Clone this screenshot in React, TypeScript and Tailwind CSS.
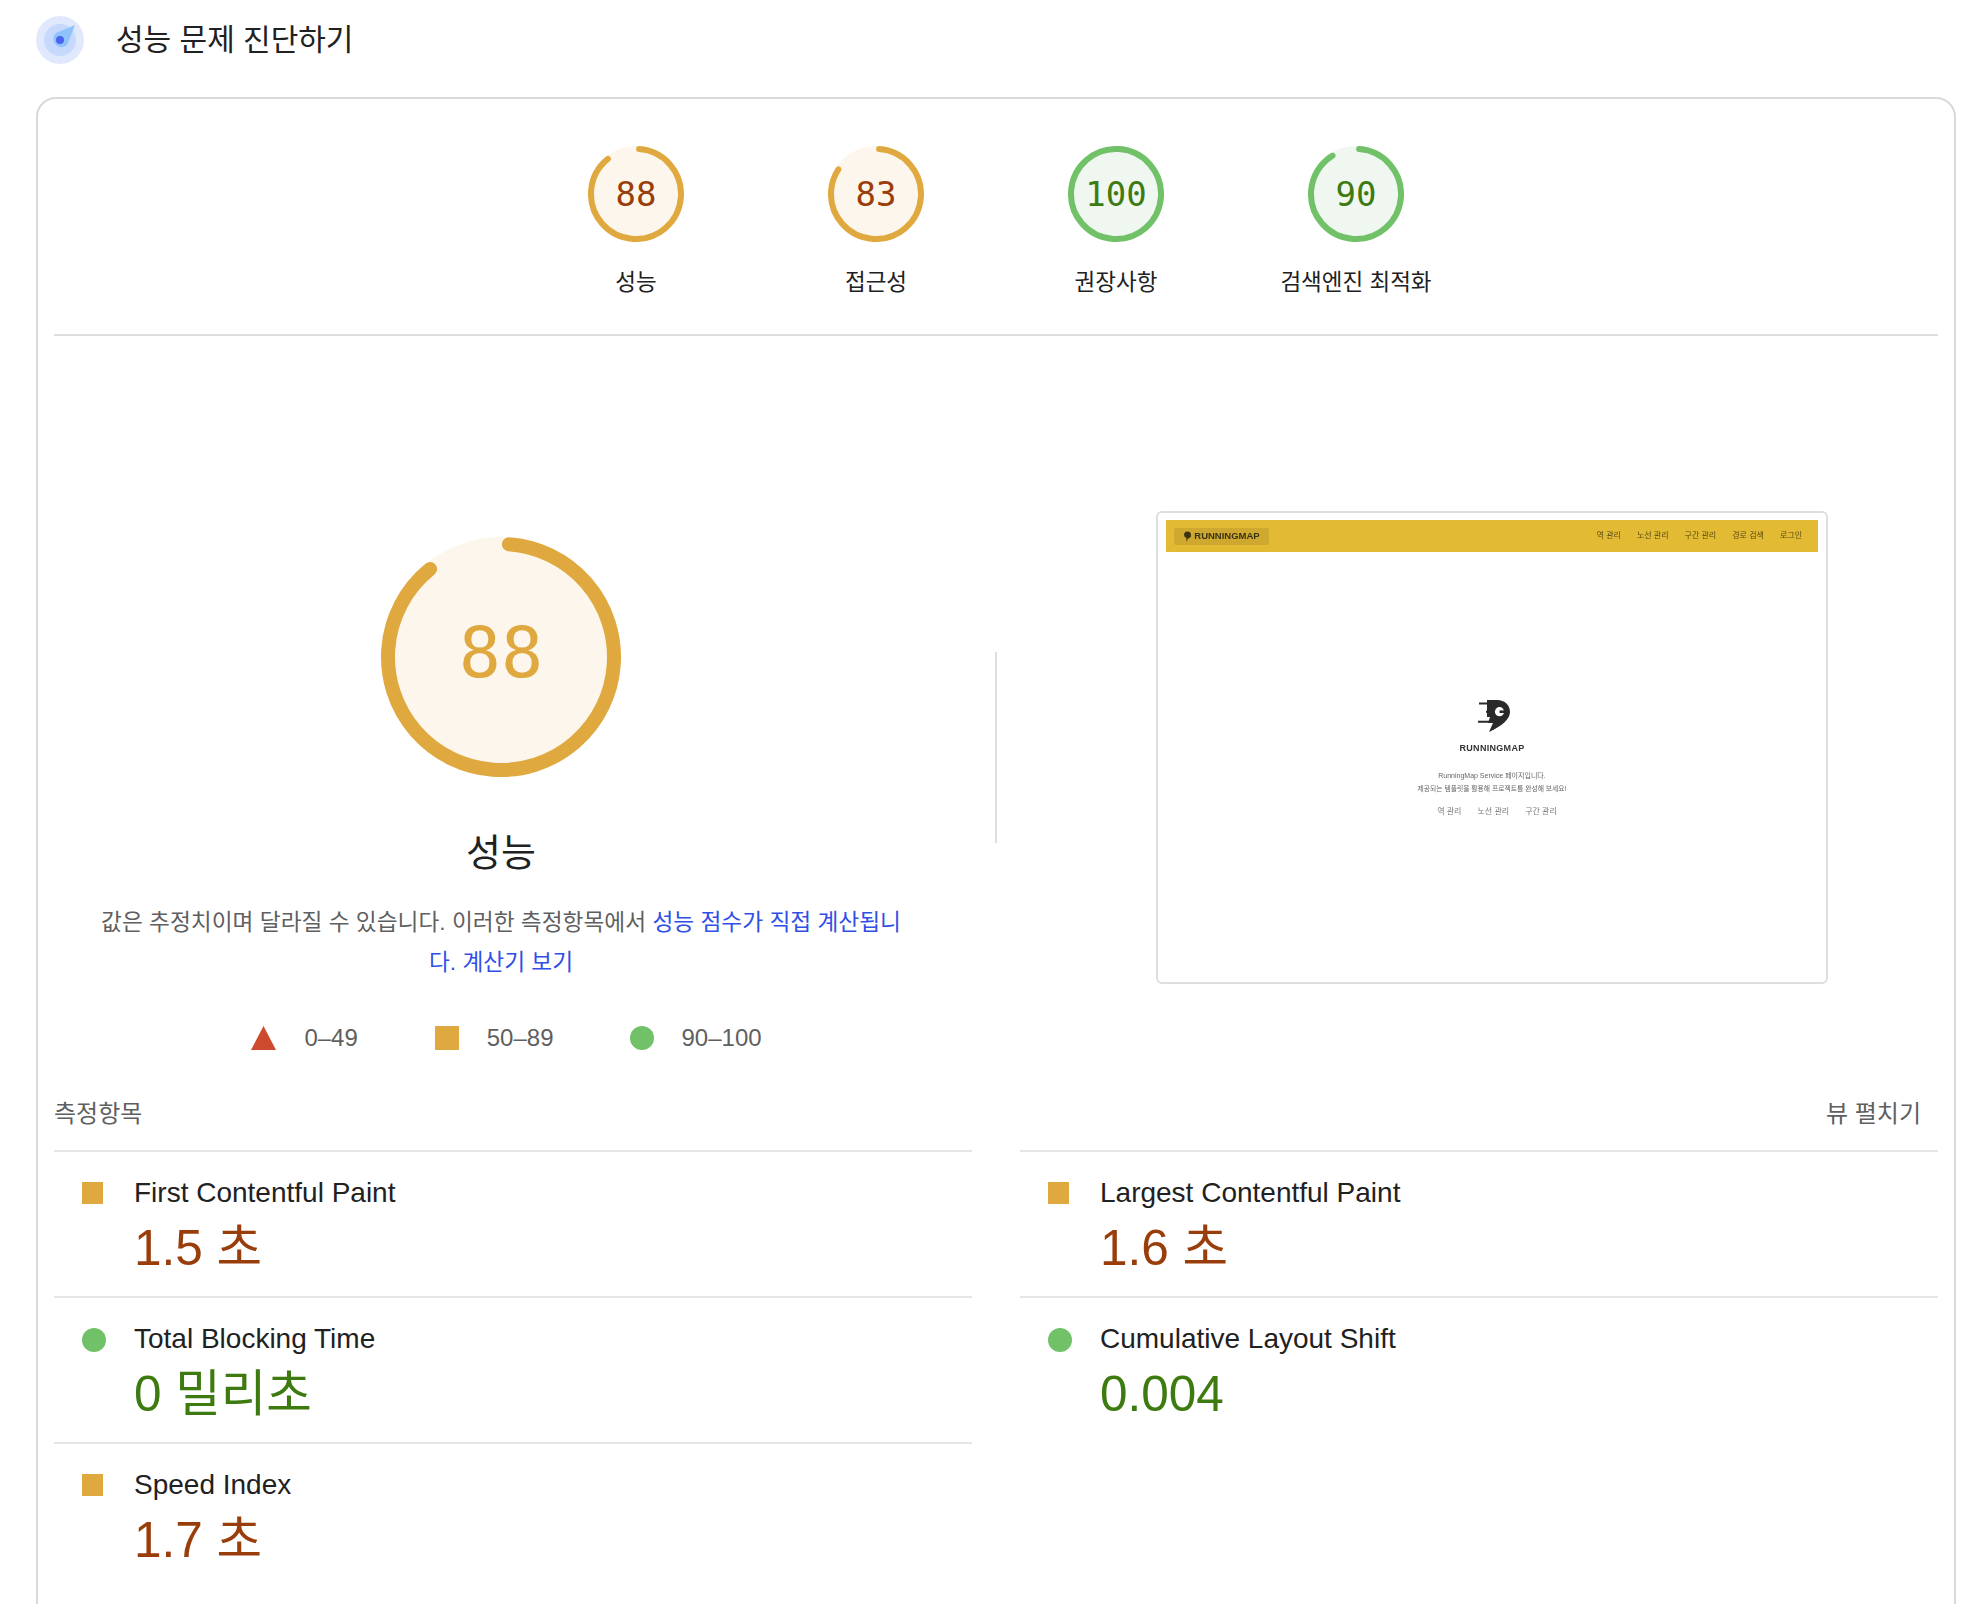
const sans = "font-['Liberation_Sans','Noto_Sans_CJK_KR',sans-serif]";

type Tone = "orange" | "green";

const tones = {
  orange: { ring: "#e0a93f", fill: "#fdf6ec", text: "#993d0a" },
  green: { ring: "#70c168", fill: "#f0f7f0", text: "#3d7a10" },
};

function Ring({ score, tone, size, stroke }: { score: number; tone: Tone; size: number; stroke: number }) {
  const c = tones[tone];
  const r = (size - stroke) / 2;
  const len = 2 * Math.PI * r;
  return (
    <svg width={size} height={size} viewBox={`0 0 ${size} ${size}`} className="block">
      <circle cx={size / 2} cy={size / 2} r={size / 2} fill={c.fill} />
      <circle
        cx={size / 2}
        cy={size / 2}
        r={r}
        fill="none"
        stroke={c.ring}
        strokeWidth={stroke}
        strokeLinecap="round"
        strokeDasharray={score === 100 ? `${len} 0` : `${(len * score) / 100} ${len}`}
        transform={`rotate(-86 ${size / 2} ${size / 2})`}
      />
    </svg>
  );
}

function Gauge({ score, label, tone }: { score: number; label: string; tone: Tone }) {
  return (
    <div className="flex w-[240px] flex-col items-center">
      <div className="relative">
        <Ring score={score} tone={tone} size={96} stroke={6} />
        <div
          className="absolute inset-0 flex items-center justify-center font-['DejaVu_Sans_Mono',monospace] text-[34px]"
          style={{ color: tones[tone].text }}
        >
          {score}
        </div>
      </div>
      <div className="mt-[25px] whitespace-nowrap text-[22.5px] leading-[32px] text-[#212121]">{label}</div>
    </div>
  );
}

function Metric({ name, value, shape, tone }: { name: string; value: string; shape: "square" | "circle"; tone: Tone }) {
  return (
    <div className="h-[146px] border-t-2 border-[#e6e6e6]">
      <div className="flex pt-[23px]">
        <div className="ml-[28px] w-[52px] pt-[7px]">
          {shape === "square" ? (
            <div className="h-[22px] w-[21px] bg-[#e0a93f]" />
          ) : (
            <div className="h-[24px] w-[24px] rounded-full bg-[#70c168]" />
          )}
        </div>
        <div>
          <div className="text-[28px] leading-[36px] text-[#212121]">{name}</div>
          <div className="mt-[9px] text-[49.5px] leading-[56px]" style={{ color: tones[tone].text }}>
            {value}
          </div>
        </div>
      </div>
    </div>
  );
}

function PageShot() {
  return (
    <div className="h-[473px] w-[672px] rounded-[6px] border-2 border-[#dedede] bg-white px-[8px] pt-[7px]">
      <div className="flex h-[32px] items-center justify-between bg-[#e2ba33] pl-[8px] pr-[16px] blur-[0.6px]">
        <div className="flex h-[17px] w-[95px] items-center justify-center gap-[2px] rounded-[2px] bg-[#cfa92f] text-[9.5px] font-bold text-[#3a3212]">
          <svg width="9" height="11" viewBox="0 0 9 11">
            <path d="M1 4a3.5 3.5 0 1 1 4 3.5L3.5 11V7A3.5 3.5 0 0 1 1 4z" fill="#3a3212" />
          </svg>
          RUNNINGMAP
        </div>
        <div className="flex gap-[16px] text-[8px] text-[#5a4c14]">
          <span>역 관리</span>
          <span>노선 관리</span>
          <span>구간 관리</span>
          <span>경로 검색</span>
          <span>로그인</span>
        </div>
      </div>
      <div className="flex flex-col items-center pt-[147px] blur-[0.6px]">
        <svg width="40" height="38" viewBox="0 0 40 38">
          <path d="M15 1h10c8 0 13 5 13 12 0 7-8 14-21 20l4-9h-5l2-6h-3z" fill="#2a2a2a" />
          <path d="M7 4.5h12M14 12.7h5M6 22.7h14" stroke="#2a2a2a" strokeWidth="2" />
          <circle cx="27.5" cy="12.7" r="4.6" fill="#fff" />
          <path d="M27.5 11.4h6v2.6h-6z" fill="#2a2a2a" />
        </svg>
        <div className="mt-[5px] text-[9px] font-bold leading-[12px] tracking-[0.3px] text-[#333]">RUNNINGMAP</div>
        <div className="mt-[15px] text-[7px] leading-[13px] text-[#666]">RunningMap Service 페이지입니다.</div>
        <div className="text-[6.8px] leading-[13px] text-[#666]">제공되는 템플릿을 활용해 프로젝트를 완성해 보세요!</div>
        <div className="ml-[10px] mt-[11px] flex gap-[16px] text-[8px] text-[#777]">
          <span>역 관리</span>
          <span>노선 관리</span>
          <span>구간 관리</span>
        </div>
      </div>
    </div>
  );
}

export default function App() {
  return (
    <div className={`h-[1604px] w-[1986px] overflow-hidden bg-white ${sans}`}>
      {/* Header */}
      <div className="flex h-[97px] items-start pl-[36px] pt-[16px]">
        <svg width="48" height="48" viewBox="0 0 48 48">
          <circle cx="24" cy="24" r="24" fill="#e0e9fc" />
          <circle cx="24" cy="24" r="16" fill="#c6d8fb" />
          <path d="M39 9L31 29a8 8 0 1 1-11-12z" fill="#8fc2fb" />
          <circle cx="24" cy="24" r="4" fill="#4c63f0" />
        </svg>
        <div className="ml-[32px] text-[30px] leading-[48px] text-[#212121]">성능 문제 진단하기</div>
      </div>

      {/* Report card */}
      <div className="ml-[36px] h-[1600px] w-[1920px] rounded-t-[20px] border-2 border-[#d9d9de] px-[16px]">
        <div className="flex h-[237px] justify-center border-b-2 border-[#dedede] pt-[47px]">
          <Gauge score={88} label="성능" tone="orange" />
          <Gauge score={83} label="접근성" tone="orange" />
          <Gauge score={100} label="권장사항" tone="green" />
          <Gauge score={90} label="검색엔진 최적화" tone="green" />
        </div>

        <div className="flex">
          <div className="flex w-[894px] flex-col items-center pt-[201px]">
            <div className="relative">
              <Ring score={88} tone="orange" size={240} stroke={14} />
              <div className="absolute inset-0 flex items-center justify-center pb-[8px] font-['DejaVu_Sans_Mono',monospace] text-[70px] font-light text-[#e0a93f]">
                88
              </div>
            </div>
            <div className="mt-[51px] text-[38px] leading-[50px] text-[#212121]">성능</div>
            <div className="mt-[24px] w-[812px] text-center text-[22.7px] leading-[40px] text-[#5f5f5f]">
              값은 추정치이며 달라질 수 있습니다. 이러한 측정항목에서{" "}
              <span className="text-[#2f4fe6]">성능 점수가 직접 계산됩니다.</span>{" "}
              <span className="text-[#2f4fe6]">계산기 보기</span>
            </div>
            <div className="ml-[11px] mt-[42px] flex items-center text-[24px] leading-[28px] text-[#5f5f5f]">
              <svg width="25" height="24" viewBox="0 0 25 24">
                <path d="M12.5 0L25 24H0z" fill="#cc4b2e" />
              </svg>
              <span className="ml-[28px]">0–49</span>
              <div className="ml-[77px] h-[24px] w-[24px] bg-[#e0a93f]" />
              <span className="ml-[28px]">50–89</span>
              <div className="ml-[76px] h-[24px] w-[24px] rounded-full bg-[#70c168]" />
              <span className="ml-[28px]">90–100</span>
            </div>
          </div>
          <div className="ml-[47px] mt-[316px] h-[191px] w-[2px] bg-[#dedede]" />
          <div className="ml-[159px] pt-[175px]">
            <PageShot />
          </div>
        </div>

        <div className="mt-[46px] flex items-center justify-between pr-[17px] text-[24px] leading-[32px] text-[#5f5f5f]">
          <span>측정항목</span>
          <span>뷰 펼치기</span>
        </div>

        <div className="mt-[20px] grid grid-cols-2 gap-x-[48px]">
          <Metric name="First Contentful Paint" value="1.5 초" shape="square" tone="orange" />
          <Metric name="Largest Contentful Paint" value="1.6 초" shape="square" tone="orange" />
          <Metric name="Total Blocking Time" value="0 밀리초" shape="circle" tone="green" />
          <Metric name="Cumulative Layout Shift" value="0.004" shape="circle" tone="green" />
          <Metric name="Speed Index" value="1.7 초" shape="square" tone="orange" />
        </div>
      </div>
    </div>
  );
}
